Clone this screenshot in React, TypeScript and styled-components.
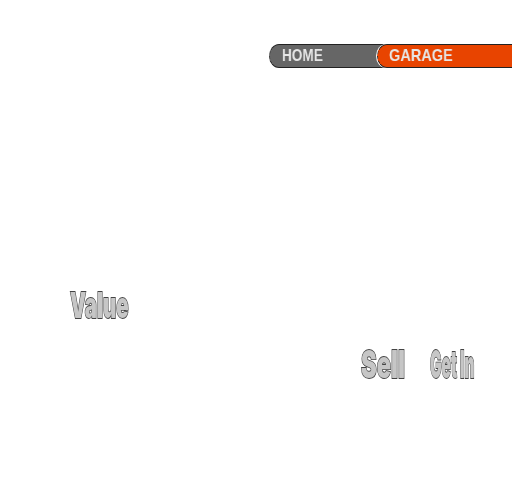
import React from "react";
import styled, { createGlobalStyle } from "styled-components";

const GlobalStyle = createGlobalStyle`
  body { margin: 0; background: #fff; }
`;

const Page = styled.main`
  width: 512px;
  height: 504px;
  box-sizing: border-box;
  padding-top: 44px;
  overflow: hidden;
  background: #fff;
`;

const Nav = styled.nav`
  display: flex;
  height: 24px;
  padding-left: 269px;
`;

const Tab = styled.a<{ $active?: boolean }>`
  box-sizing: border-box;
  flex: none;
  width: ${(p) => (p.$active ? 135 : 116)}px;
  height: 24px;
  margin-left: ${(p) => (p.$active ? -8 : 0)}px;
  padding-left: ${(p) => (p.$active ? 10.5 : 11.5)}px;
  border: 1px dashed #222;
  border-width: 1px 0 1px 1px;
  border-top-style: solid;
  border-bottom-style: solid;
  border-radius: 10px 0 0 10px / 12px 0 0 12px;
  background: ${(p) => (p.$active ? "#e84400" : "#666")};
  box-shadow: ${(p) => (p.$active ? "-1px 0 0 #fff" : "none")};
  color: #e6e6e6;
  text-decoration: none;
`;

const Label = styled.span<{ $squeeze: number }>`
  display: inline-block;
  font: bold 17px/22px "Liberation Sans", sans-serif;
  transform: scaleX(${(p) => p.$squeeze});
  transform-origin: left;
  will-change: transform;
`;

const Row = styled.div<{ $top: number; $left: number; $gap?: number }>`
  display: flex;
  gap: ${(p) => p.$gap ?? 0}px;
  padding: ${(p) => p.$top}px 0 0 ${(p) => p.$left}px;
`;

const Lettering = styled.svg<{ $size: number }>`
  display: block;
  flex: none;
  overflow: visible;
  font-family: Inter, sans-serif;
  font-size: ${(p) => p.$size}px;
  font-weight: 900;
  fill: #c6c6c6;
  stroke: #444;
  stroke-width: 1.8px;
  paint-order: stroke;
  will-change: transform;
`;

function Word({ width, height, size, children }: { width: number; height: number; size: number; children: string }) {
  return (
    <Lettering width={width} height={height} $size={size}>
      <text x={0} y={height - 2.2} textLength={width} lengthAdjust="spacingAndGlyphs">
        {children}
      </text>
    </Lettering>
  );
}

export default function App() {
  return (
    <>
      <GlobalStyle />
      <Page>
        <Nav>
          <Tab><Label $squeeze={0.8}>HOME</Label></Tab>
          <Tab $active><Label $squeeze={0.855}>GARAGE</Label></Tab>
        </Nav>
        <Row $top={223} $left={70}>
          <Word width={58.5} height={29} size={36}>Value</Word>
        </Row>
        <Row $top={29} $left={361} $gap={25}>
          <Word width={44} height={31} size={38.5}>Sell</Word>
          <Word width={44.5} height={31} size={38.5}>Get In</Word>
        </Row>
      </Page>
    </>
  );
}
